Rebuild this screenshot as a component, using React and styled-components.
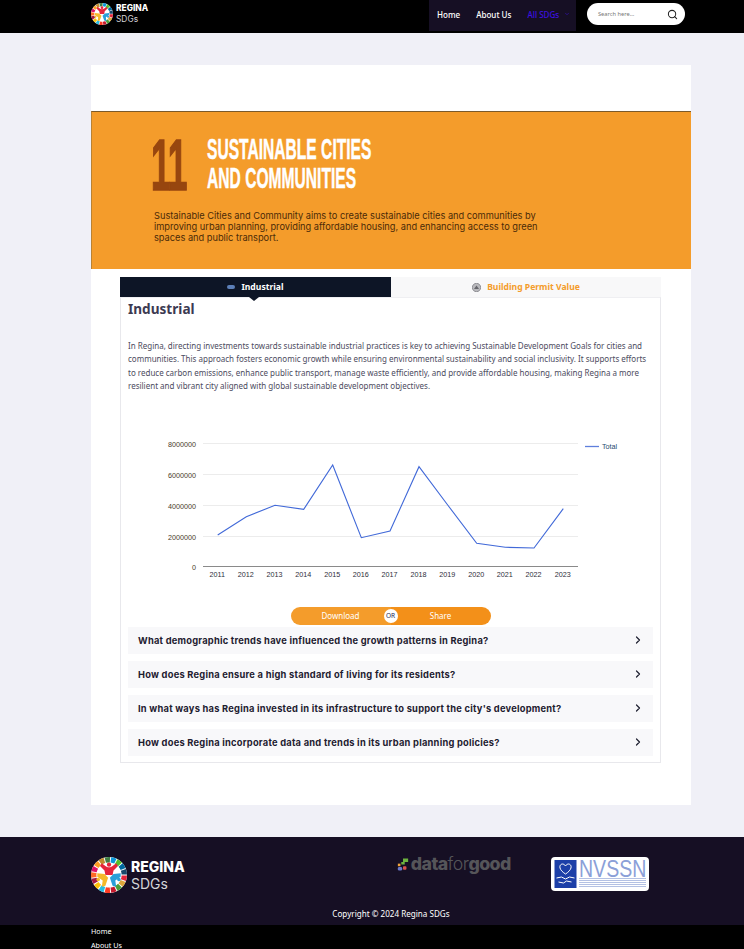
import React from "react";
import styled, { createGlobalStyle } from "styled-components";
import { ChevronRight, ChevronDown, Search } from "lucide-react";

const GlobalStyle = createGlobalStyle`
  * { box-sizing: border-box; }
  html, body { margin: 0; padding: 0; }
  body {
    height: 949px;
    overflow: hidden;
    background: #f0f0f7;
    font-family: "Noto Sans", "Open Sans", sans-serif;
  }
`;

const Header = styled.header`
  height: 33px;
  background: #000;
  display: flex;
  padding: 0 59px 0 91px;
  justify-content: space-between;
`;
const LogoLink = styled.div`
  display: flex;
  align-items: center;
  gap: ${({ $big }) => ($big ? "4px" : "3px")};
  height: ${({ $big }) => ($big ? "36px" : "27px")};
`;
const LogoText = styled.div`
  font-family: Inter, "Noto Sans", sans-serif;
  color: #fff;
  font-size: ${({ $big }) => ($big ? "14px" : "8.4px")};
  line-height: ${({ $big }) => ($big ? "17px" : "10.5px")};
  b { display: block; font-weight: 800; }
  span { display: block; color: #d4d4d8; font-weight: 400; }
`;
const HeaderRight = styled.div`
  display: flex;
  align-items: flex-start;
  gap: 11px;
`;
const Nav = styled.nav`
  width: 147px;
  height: 31px;
  background: #160f24;
  display: flex;
  align-items: center;
  padding: 0 0 3px 8px;
  gap: 16px;
  font-size: 8.05px;
  font-weight: 500;
  color: #fff;
`;
const NavItem = styled.span`
  display: flex;
  align-items: center;
  gap: 5px;
  color: ${({ $active }) => ($active ? "#3d10e0" : "#fff")};
`;
const SearchBox = styled.div`
  width: 98px;
  height: 22px;
  margin-top: 3px;
  border-radius: 11px;
  background: #fff;
  display: flex;
  align-items: center;
  justify-content: space-between;
  padding: 0 7px 0 11px;
  font-size: 5.7px;
  color: #777;
`;

const Main = styled.main`
  margin: 32px 53px 32px 91px;
  height: 740px;
  background: #fff;
  padding-top: 46px;
`;
const Banner = styled.section`
  height: 158px;
  background: #f49c2b;
  border-top: 1px solid #7b5a2a;
  border-left: 1px solid #b98234;
  padding: 26px 0 0 59px;
`;
const BannerTop = styled.div`
  display: flex;
  align-items: flex-start;
  gap: 20px;
  height: 72px;
`;
const Goal = styled.div`
  width: 36px;
  font-family: "Liberation Sans", sans-serif;
  font-size: 72px;
  line-height: 54px;
  font-weight: 700;
  color: #97460f;
  letter-spacing: -2px;
  white-space: nowrap;
  -webkit-text-stroke: 1.6px #97460f;
  transform: scaleX(0.49);
  transform-origin: left;
`;
const GoalTitle = styled.h1`
  margin: -4px 0 0;
  font-family: "Liberation Sans", sans-serif;
  font-size: 30px;
  line-height: 29px;
  font-weight: 700;
  color: #fff;
  white-space: nowrap;
  -webkit-text-stroke: 0.5px #fff;
  transform: scaleX(0.52);
  transform-origin: left;
`;
const BannerText = styled.p`
  margin: 0 0 0 3px;
  width: 392px;
  font-family: Inter, sans-serif;
  font-size: 9.24px;
  line-height: 11px;
  color: #4a2a08;
`;

const Panel = styled.section`
  margin: 8px 30px 0 29px;
`;
const Tabs = styled.div`
  display: grid;
  grid-template-columns: 271px 1fr;
  height: 20px;
`;
const Tab = styled.div`
  position: relative;
  display: flex;
  align-items: center;
  justify-content: center;
  gap: 6px;
  font-size: 8.6px;
  font-weight: 700;
  color: ${({ $active }) => ($active ? "#fff" : "#f49c2b")};
  background: ${({ $active }) => ($active ? "#0d1526" : "#f8f8f9")};
  ${({ $active }) =>
    $active &&
    `&::after {
      content: "";
      position: absolute;
      left: 129px;
      top: 20px;
      border: 5px solid transparent;
      border-top: 4px solid #0d1526;
      border-bottom: 0;
    }`}
`;
const TabBody = styled.div`
  height: 466px;
  border: 1px solid #e8e8ec;
  border-top: 1px solid #efeff2;
  padding: 0 7px;
`;
const Heading = styled.h2`
  margin: 1px 0 0;
  font-size: 13.6px;
  line-height: 19px;
  font-weight: 700;
  color: #3c3a52;
`;
const Copy = styled.p`
  margin: 21px 0 0;
  font-size: 8px;
  line-height: 13.4px;
  color: #4c4b60;
`;
const ChartBox = styled.div`
  margin: 39px 0 0 22px;
  height: 159px;
`;
const Actions = styled.div`
  position: relative;
  display: flex;
  width: 200px;
  height: 18px;
  margin: 16px auto 2px;
`;
const ActionButton = styled.div`
  flex: 1;
  display: flex;
  align-items: center;
  justify-content: center;
  font-size: 8px;
  color: #fff;
  background: ${({ $alt }) => ($alt ? "#f39019" : "#f49c2b")};
  border-radius: ${({ $alt }) => ($alt ? "0 9px 9px 0" : "9px 0 0 9px")};
`;
const OrBadge = styled.span`
  position: absolute;
  left: 93px;
  top: 2px;
  width: 14px;
  height: 14px;
  border-radius: 50%;
  background: #fff;
  color: #1d2a55;
  font-size: 6.5px;
  font-weight: 400;
  display: flex;
  align-items: center;
  justify-content: center;
`;
const Faq = styled.div`
  display: flex;
  flex-direction: column;
  gap: 7px;
`;
const FaqRow = styled.div`
  height: 27px;
  background: #f8f8fa;
  display: flex;
  align-items: center;
  justify-content: space-between;
  padding: 0 9px 0 10px;
  font-family: Inter, sans-serif;
  font-size: 9.3px;
  letter-spacing: 0.24px;
  font-weight: 700;
  color: #1e2030;
`;

const Footer = styled.footer`
  background: #160f24;
  height: 112px;
  padding-top: 1px;
`;
const FooterTop = styled.div`
  height: 70px;
  padding: 19px 95px 0 91px;
  display: flex;
  align-items: flex-start;
`;
const DataForGood = styled.div`
  display: flex;
  align-items: center;
  gap: 2px;
  margin: -3px 0 0 212px;
  font-family: Inter, sans-serif;
  font-size: 17.8px;
  line-height: 20px;
  letter-spacing: -0.6px;
  font-weight: 800;
  color: #555559;
  i { font-style: normal; font-weight: 300; }
`;
const NvssnCard = styled.div`
  width: 98px;
  height: 34px;
  margin-left: auto;
  background: #fff;
  border-radius: 4px;
  display: flex;
  padding: 3px;
  gap: 2px;
`;
const NvssnMark = styled.div`
  width: 23px;
  height: 28px;
`;
const NvssnName = styled.div`
  font-family: "Liberation Sans", sans-serif;
  font-size: 23px;
  line-height: 18px;
  font-weight: 400;
  color: #8ba0d8;
  white-space: nowrap;
  transform: scaleX(0.85);
  transform-origin: left;
`;
const NvssnLines = styled.div`
  height: 10px;
  background: repeating-linear-gradient(#b4c1e3 0 1px, #fff 1px 2px);
  width: 67px;
`;
const Copyright = styled.div`
  text-align: center;
  color: #fff;
  font-size: 8.1px;
  line-height: 12px;
  padding-left: 38px;
`;
const FooterLinks = styled.ul`
  list-style: none;
  margin: 5px 0 0;
  height: 24px;
  background: #000;
  padding: 2px 0 0 91px;
  color: #fff;
  font-size: 7.2px;
  display: flex;
  flex-direction: column;
  gap: 6px;
  li { height: 8px; line-height: 8px; }
`;

const wheelColors = [
  "#e5243b", "#dda63a", "#4c9f38", "#c5192d", "#ff3a21", "#26bde2", "#fcc30b", "#a21942", "#fd6925",
  "#dd1367", "#fd9d24", "#bf8b2e", "#3f7e44", "#0a97d9", "#56c02b", "#00689d", "#19486a",
];

function wedge(i, n, r1, r2) {
  const a1 = (i / n) * Math.PI * 2 + 0.03;
  const a2 = ((i + 1) / n) * Math.PI * 2 - 0.03;
  const p = (r, a) => `${(20 + r * Math.cos(a)).toFixed(2)} ${(20 + r * Math.sin(a)).toFixed(2)}`;
  return `M${p(r1, a1)}A${r1} ${r1} 0 0 1 ${p(r1, a2)}L${p(r2, a2)}A${r2} ${r2} 0 0 0 ${p(r2, a1)}Z`;
}

function Wheel({ size }) {
  return (
    <svg width={size} height={size} viewBox="0 0 40 40">
      <circle cx="20" cy="20" r="20" fill="#fff" />
      {wheelColors.map((c, i) => (
        <path key={i} d={wedge(i, wheelColors.length, 20, 14)} fill={c} />
      ))}
      <path d="M12 7l4 3c2 2 6 2 8 0l4-3 2 3-5 5-1 5h-8l-1-5-5-5z" fill="#e5243b" />
      <circle cx="20" cy="8.5" r="2.4" fill="#e5243b" />
      <path d="M7 18l8 1 4 4-3 9-4 1 1-7-6-4z" fill="#f5b92a" />
      <circle cx="8" cy="25" r="2" fill="#f5b92a" />
      <path d="M33 18l-8 1-4 4 3 9 4 1-1-7 6-4z" fill="#2a9fd8" />
      <circle cx="31" cy="25" r="2" fill="#2a9fd8" />
    </svg>
  );
}

const years = [2011, 2012, 2013, 2014, 2015, 2016, 2017, 2018, 2019, 2020, 2021, 2022, 2023];
const points = [
  [217.7, 535], [246.3, 516.7], [275, 505.3], [303.7, 509.3], [332.7, 465], [361.3, 537.7], [390, 531],
  [419, 466.7], [447.7, 505], [476.7, 543.3], [505.3, 547.3], [534, 548], [563.3, 508.7],
];
const ticks = [
  ["8000000", 443.5], ["6000000", 474.5], ["4000000", 505.5], ["2000000", 536.5],
];

// chart coordinates below are page pixels, the viewBox moves them into the box
function LineChart() {
  return (
    <svg width="500" height="159" viewBox="150 432 500 159" fontFamily="Liberation Sans, sans-serif">
      {ticks.map(([label, y]) => (
        <g key={label}>
          <line x1="203" x2="578" y1={y} y2={y} stroke="#ececec" />
          <text x="196" y={y + 3} fontSize="7.2" fill="#4a3a2a" textAnchor="end">{label}</text>
        </g>
      ))}
      <line x1="203" x2="578" y1="566.5" y2="566.5" stroke="#8a8a8a" />
      <text x="196" y="569.5" fontSize="7.2" fill="#4a3a2a" textAnchor="end">0</text>
      {years.map((year, i) => (
        <text key={year} x={points[i][0] - 0.5} y="577" fontSize="7.2" fill="#2e2e3a" textAnchor="middle">{year}</text>
      ))}
      <polyline points={points.map((p) => p.join(",")).join(" ")} fill="none" stroke="#4169d8" strokeWidth="1.1" />
      <line x1="585" x2="599" y1="446.5" y2="446.5" stroke="#5f7fdc" strokeWidth="1.3" />
      <text x="602" y="449" fontSize="7.2" fill="#1f4a70">Total</text>
    </svg>
  );
}

const questions = [
  "What demographic trends have influenced the growth patterns in Regina?",
  "How does Regina ensure a high standard of living for its residents?",
  "In what ways has Regina invested in its infrastructure to support the city's development?",
  "How does Regina incorporate data and trends in its urban planning policies?",
];

export default function App() {
  return (
    <>
      <GlobalStyle />
      <Header>
        <LogoLink>
          <Wheel size={22} />
          <LogoText>
            <b>REGINA</b>
            <span>SDGs</span>
          </LogoText>
        </LogoLink>
        <HeaderRight>
          <Nav>
            <NavItem>Home</NavItem>
            <NavItem>About Us</NavItem>
            <NavItem $active>
              All SDGs <ChevronDown size={6} strokeWidth={2} />
            </NavItem>
          </Nav>
          <SearchBox>
            Search here...
            <Search size={11} color="#222" strokeWidth={2.2} />
          </SearchBox>
        </HeaderRight>
      </Header>

      <Main>
        <Banner>
          <BannerTop>
            <Goal>11</Goal>
            <GoalTitle>
              SUSTAINABLE CITIES
              <br />
              AND COMMUNITIES
            </GoalTitle>
          </BannerTop>
          <BannerText>
            Sustainable Cities and Community aims to create sustainable cities and communities by improving urban
            planning, providing affordable housing, and enhancing access to green spaces and public transport.
          </BannerText>
        </Banner>
        <Panel>
          <Tabs>
            <Tab $active>
              <svg width="8" height="4" viewBox="0 0 8 4">
                <rect width="8" height="4" rx="2" fill="#5c7fb8" />
              </svg>
              Industrial
            </Tab>
            <Tab>
              <svg width="9" height="9" viewBox="0 0 9 9">
                <circle cx="4.5" cy="4.5" r="4.2" fill="#b9b9bd" stroke="#77777c" strokeWidth="0.7" />
                <path d="M2 6l2.5-3.5L7 6z" fill="#66666c" />
              </svg>
              Building Permit Value
            </Tab>
          </Tabs>
          <TabBody>
            <Heading>Industrial</Heading>
            <Copy>
              In Regina, directing investments towards sustainable industrial practices is key to achieving Sustainable
              Development Goals for cities and communities. This approach fosters economic growth while ensuring
              environmental sustainability and social inclusivity. It supports efforts to reduce carbon emissions,
              enhance public transport, manage waste efficiently, and provide affordable housing, making Regina a more
              resilient and vibrant city aligned with global sustainable development objectives.
            </Copy>
            <ChartBox>
              <LineChart />
            </ChartBox>
            <Actions>
              <ActionButton>Download</ActionButton>
              <ActionButton $alt>Share</ActionButton>
              <OrBadge>OR</OrBadge>
            </Actions>
            <Faq>
              {questions.map((q) => (
                <FaqRow key={q}>
                  {q}
                  <ChevronRight size={12} color="#1e2030" strokeWidth={2.4} />
                </FaqRow>
              ))}
            </Faq>
          </TabBody>
        </Panel>
      </Main>

      <Footer>
        <FooterTop>
          <LogoLink $big>
            <Wheel size={36} />
            <LogoText $big>
              <b>REGINA</b>
              <span>SDGs</span>
            </LogoText>
          </LogoLink>
          <DataForGood>
            <svg width="12" height="15" viewBox="0 0 14 16">
              <path d="M7 1h6v4H9v3H5V5h2z" fill="#6db33f" />
              <rect x="1" y="7" width="3" height="3" fill="#f2a33a" />
              <rect x="1" y="11" width="5" height="4" rx="1.5" fill="#6a79c9" />
              <rect x="7" y="10" width="4" height="4" rx="1" fill="#d9524f" />
            </svg>
            <span>
              data<i>for</i>good
            </span>
          </DataForGood>
          <NvssnCard>
            <NvssnMark>
              <svg width="23" height="28" viewBox="0 0 22 28">
                <rect width="22" height="28" fill="#1c3fa8" />
                <path d="M11 14c-8-5-6-10-3-10 2 0 3 2 3 2s1-2 3-2c3 0 5 5-3 10z" fill="none" stroke="#fff" strokeWidth="1" />
                <path d="M2 18l5-1 4 2 4-2 5 1M4 22l5 1 3-2 5 1" fill="none" stroke="#fff" strokeWidth="1" />
              </svg>
            </NvssnMark>
            <div>
              <NvssnName>NVSSN</NvssnName>
              <NvssnLines />
            </div>
          </NvssnCard>
        </FooterTop>
        <Copyright>Copyright © 2024 Regina SDGs</Copyright>
        <FooterLinks>
          <li>Home</li>
          <li>About Us</li>
        </FooterLinks>
      </Footer>
    </>
  );
}
